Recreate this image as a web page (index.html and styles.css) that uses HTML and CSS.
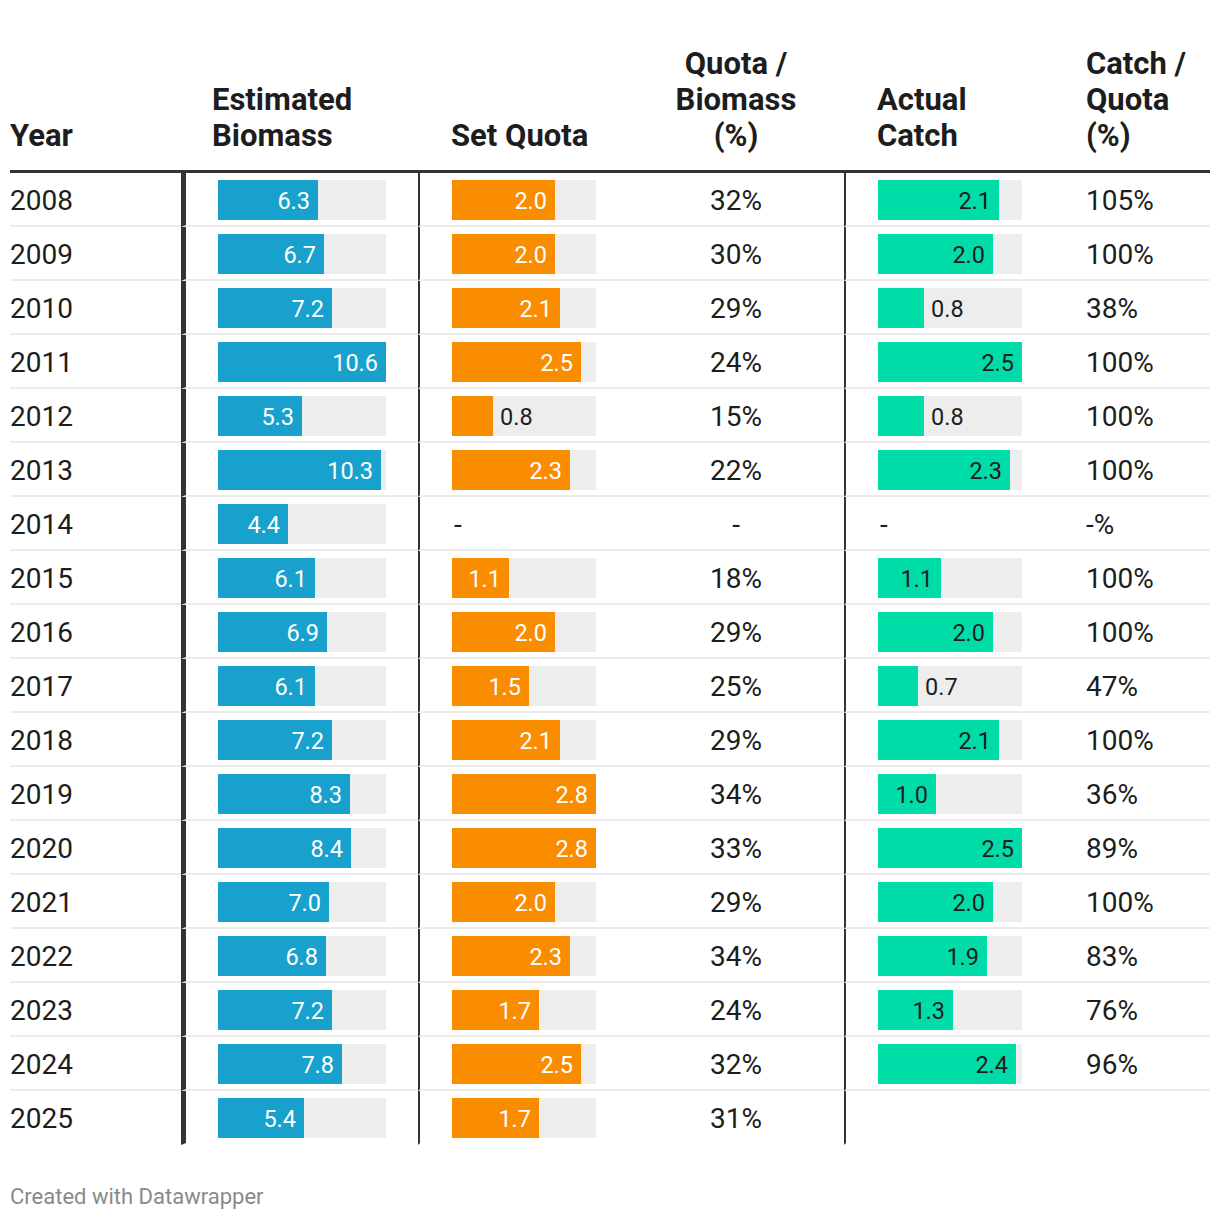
FILE: index.html
```html
<!DOCTYPE html>
<html lang="en">
<head>
<meta charset="utf-8">
<title>Biomass, quota and catch</title>
<link rel="stylesheet" href="styles.css">
</head>
<body>
<div class="chart">
  <div class="table">
    <div class="row head">
      <div class="cell c-year">Year</div>
      <div class="cell c-bio">Estimated<br>Biomass</div>
      <div class="cell c-quota">Set Quota</div>
      <div class="cell c-qb">Quota /<br>Biomass<br>(%)</div>
      <div class="cell c-catch">Actual<br>Catch</div>
      <div class="cell c-cq">Catch /<br>Quota<br>(%)</div>
    </div>
    <div id="body"></div>
  </div>
  <div class="footer">Created with Datawrapper</div>
</div>
<script src="script.js"></script>
</body>
</html>
```

FILE: styles.css
```css
html, body {
  margin: 0;
  padding: 0;
  background: #fff;
}
body {
  font-family: Roboto, "Liberation Sans", sans-serif;
  color: #1d1d1d;
}
.chart {
  padding: 46px 10px 0 10px;
}
.row {
  display: grid;
  grid-template-columns: 171px 237px 210px 216px 210px 156px;
}
.head {
  border-bottom: 3px solid #333;
}
.head .cell {
  font-weight: 700;
  font-size: 31px;
  line-height: 36px;
  display: flex;
  flex-direction: column;
  justify-content: flex-end;
  padding-bottom: 16px;
}
.head .c-year { padding-left: 0; }
.head .c-bio { padding-left: 31px; }
.head .c-quota { padding-left: 33px; }
.head .c-qb { text-align: center; }
.head .c-catch { padding-left: 33px; }
.head .c-cq { padding-left: 32px; }

.body-row .cell {
  height: 52px;
  box-sizing: border-box;
  height: 54px;
  border-bottom: 2px solid #ececec;
  display: flex;
  align-items: center;
  font-size: 28px;
}
.body-row .txt {
  padding-top: 3px;
}
.body-row.last .cell {
  border-bottom-color: transparent;
}
.body-row .c-year { padding-left: 0; }
.body-row .c-bio {
  border-left: 5px solid #333;
  padding-left: 32px;
}
.body-row .c-quota {
  border-left: 2px solid #333;
  padding-left: 32px;
}
.body-row .c-qb {
  justify-content: center;
}
.body-row .c-catch {
  border-left: 2px solid #333;
  padding-left: 32px;
}
.body-row .c-cq {
  padding-left: 32px;
}
.body-row .dash {
  padding-left: 2px;
  padding-top: 3px;
}

.track {
  position: relative;
  height: 40px;
  margin-top: 2px;
  background: #ededed;
  display: flex;
}
.track.w168 { width: 168px; }
.track.w144 { width: 144px; }
.fill {
  height: 40px;
  display: flex;
  align-items: center;
  justify-content: flex-end;
  box-sizing: border-box;
  padding-right: 8px;
  padding-top: 2px;
  font-size: 23.5px;
  color: #fff;
  flex: none;
}
.fill.blue { background: #19a1cd; }
.fill.orange { background: #fa8c00; }
.fill.green { background: #00dca8; color: #1d1d1d; }
.outside {
  display: flex;
  align-items: center;
  padding-left: 7px;
  padding-top: 2px;
  font-size: 23.5px;
  color: #1d1d1d;
}

.footer {
  margin-top: 40px;
  font-size: 22px;
  line-height: 24px;
  color: #8a8a8a;
  padding-left: 0;
}
```

FILE: script.js
```js
var data = [
  [2008, 6.3, 2.0, "32%", 2.1, "105%"],
  [2009, 6.7, 2.0, "30%", 2.0, "100%"],
  [2010, 7.2, 2.1, "29%", 0.8, "38%"],
  [2011, 10.6, 2.5, "24%", 2.5, "100%"],
  [2012, 5.3, 0.8, "15%", 0.8, "100%"],
  [2013, 10.3, 2.3, "22%", 2.3, "100%"],
  [2014, 4.4, null, "-", null, "-%"],
  [2015, 6.1, 1.1, "18%", 1.1, "100%"],
  [2016, 6.9, 2.0, "29%", 2.0, "100%"],
  [2017, 6.1, 1.5, "25%", 0.7, "47%"],
  [2018, 7.2, 2.1, "29%", 2.1, "100%"],
  [2019, 8.3, 2.8, "34%", 1.0, "36%"],
  [2020, 8.4, 2.8, "33%", 2.5, "89%"],
  [2021, 7.0, 2.0, "29%", 2.0, "100%"],
  [2022, 6.8, 2.3, "34%", 1.9, "83%"],
  [2023, 7.2, 1.7, "24%", 1.3, "76%"],
  [2024, 7.8, 2.5, "32%", 2.4, "96%"],
  [2025, 5.4, 1.7, "31%", undefined, ""]
];

function bar(val, max, width, color) {
  if (val === null) return '<span class="dash">-</span>';
  if (val === undefined) return '';
  var w = Math.round(val / max * width);
  var label = val.toFixed(1);
  var inside = w >= 50;
  var html = '<div class="track w' + width + '">';
  html += '<div class="fill ' + color + '" style="width:' + w + 'px">' + (inside ? label : '') + '</div>';
  if (!inside) html += '<div class="outside">' + label + '</div>';
  html += '</div>';
  return html;
}

var out = '';
data.forEach(function (d, i) {
  var last = i === data.length - 1 ? ' last' : '';
  out += '<div class="row body-row' + last + '">';
  out += '<div class="cell c-year"><span class="txt">' + d[0] + '</span></div>';
  out += '<div class="cell c-bio">' + bar(d[1], 10.6, 168, 'blue') + '</div>';
  out += '<div class="cell c-quota">' + bar(d[2], 2.8, 144, 'orange') + '</div>';
  out += '<div class="cell c-qb"><span class="txt">' + d[3] + '</span></div>';
  out += '<div class="cell c-catch">' + bar(d[4], 2.5, 144, 'green') + '</div>';
  out += '<div class="cell c-cq"><span class="txt">' + d[5] + '</span></div>';
  out += '</div>';
});
document.getElementById('body').innerHTML = out;
```
